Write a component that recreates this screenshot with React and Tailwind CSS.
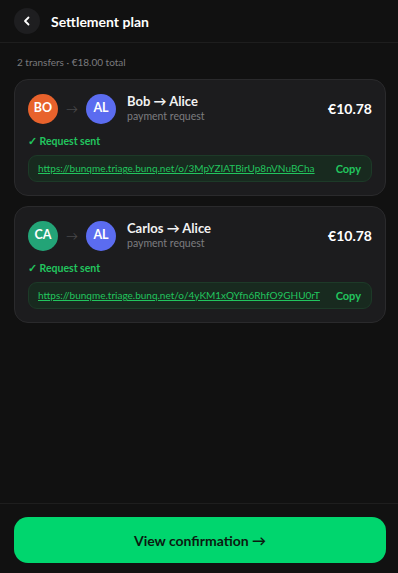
import React from 'react';

const transfers = [
  {
    from: 'BO',
    fromColor: 'bg-[#e8622c]',
    to: 'AL',
    title: 'Bob → Alice',
    amount: '€10.78',
    link: 'https://bunqme.triage.bunq.net/o/3MpYZIATBirUp8nVNuBCha',
  },
  {
    from: 'CA',
    fromColor: 'bg-[#23a477]',
    to: 'AL',
    title: 'Carlos → Alice',
    amount: '€10.78',
    link: 'https://bunqme.triage.bunq.net/o/4yKM1xQYfn6RhfO9GHU0rT',
  },
];

const TransferCard = ({ t }) => (
  <div className="rounded-[14px] border border-[#2a2a2c] bg-[#1c1c1e] px-[13px] pt-[13px] pb-[13px]">
    <div className="flex items-center">
      <div className={`flex h-[30px] w-[30px] items-center justify-center rounded-full ${t.fromColor} text-[12.5px] font-bold text-white`}>
        {t.from}
      </div>
      <span className="mx-[8px] text-[12px] text-[#48484a]">→</span>
      <div className="flex h-[30px] w-[30px] items-center justify-center rounded-full bg-[#5b6cf0] text-[12.5px] font-bold text-white">
        {t.to}
      </div>
      <div className="ml-[11px] flex flex-col">
        <span className="text-[13px] leading-[16px] font-bold text-[#f2f2f2]">{t.title}</span>
        <span className="text-[10.5px] leading-[15px] text-[#7d7d80]">payment request</span>
      </div>
      <span className="ml-auto text-[14px] font-bold text-white">{t.amount}</span>
    </div>
    <div className="mt-[10px] text-[10.5px] leading-[15px] font-bold text-[#22c55e]">✓ Request sent</div>
    <div className="mt-[6px] flex items-center justify-between rounded-[9px] border border-[#1d3a28] bg-[#182a1f] py-[5px] pr-[10px] pl-[9px]">
      <a href="#" className="text-[10px] leading-[15px] whitespace-nowrap text-[#22c55e] underline">{t.link}</a>
      <span className="text-[11px] leading-[15px] font-bold text-[#22c55e]">Copy</span>
    </div>
  </div>
);

const App = () => {
  return (
    <div className="flex h-[573px] w-[398px] flex-col bg-[#111111] font-['Lato',sans-serif]">
      {/* header */}
      <div className="flex h-[43px] items-center gap-[11px] border-b border-[#1e1e1e] pr-[12px] pl-[14px]">
        <button className="flex h-[26px] w-[26px] items-center justify-center rounded-full bg-[#1e1e20] text-white">
          <svg width="10" height="10" viewBox="0 0 10 10" fill="none" stroke="currentColor" strokeWidth="1.8" strokeLinecap="round" strokeLinejoin="round">
            <path d="M6.5 1.5 3 5l3.5 3.5" />
          </svg>
        </button>
        <h1 className="text-[14px] font-bold text-white">Settlement plan</h1>
      </div>

      {/* content */}
      <div className="flex flex-1 flex-col pr-[12px] pl-[14px]">
        <p className="mt-[12px] pl-[3px] text-[10px] leading-[15px] text-[#7a7a7d]">2 transfers · €18.00 total</p>
        <div className="mt-[9px] flex flex-col gap-[10px]">
          {transfers.map((t) => (
            <TransferCard key={t.from} t={t} />
          ))}
        </div>
      </div>

      {/* footer */}
      <div className="border-t border-[#1e1e1e] pt-[13px] pr-[12px] pb-[10px] pl-[14px]">
        <button className="flex h-[46px] w-full items-center justify-center rounded-[14px] bg-[#00d66e] text-[14px] font-bold text-[#0b1a10]">
          View confirmation →
        </button>
      </div>
    </div>
  );
};

export default App;
